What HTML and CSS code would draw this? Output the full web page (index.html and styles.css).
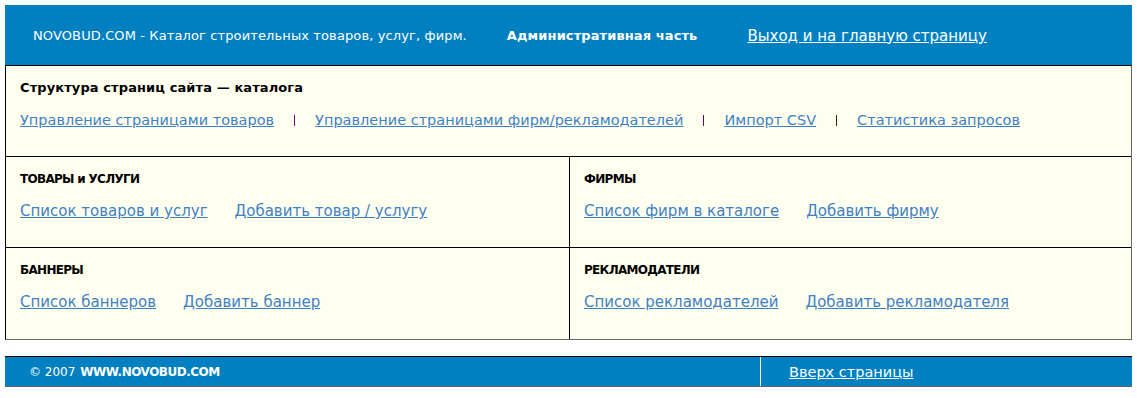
FILE: index.html
```html
<!DOCTYPE html>
<html lang="ru">
<head>
  <meta charset="UTF-8" />
  <title>NOVOBUD.COM - Административная часть</title>
  <link rel="stylesheet" href="styles.css">
</head>
<body>
  <!-- Top bar -->
  <div class="topbar">
    <span class="site">NOVOBUD.COM - Каталог строительных товаров, услуг, фирм.</span>
    <span class="admin">Административная часть</span>
    <a href="#" class="exit">Выход и на главную страницу</a>
  </div>

  <!-- Catalog management -->
  <div class="panel">
    <div class="section">
      <div class="title">Структура страниц сайта — каталога</div>
      <div class="links">
        <a href="#">Управление страницами товаров</a>
        <span class="sep sep1"></span>
        <a href="#">Управление страницами фирм/рекламодателей</a>
        <span class="sep sep2"></span>
        <a href="#">Импорт CSV</a>
        <span class="sep sep3"></span>
        <a href="#">Статистика запросов</a>
      </div>
    </div>

    <div class="grid">
      <div class="cell">
        <div class="title caps">ТОВАРЫ и УСЛУГИ</div>
        <div class="links">
          <a href="#">Список товаров и услуг</a>
          <a href="#">Добавить товар / услугу</a>
        </div>
      </div>
      <div class="cell">
        <div class="title caps">ФИРМЫ</div>
        <div class="links">
          <a href="#">Список фирм в каталоге</a>
          <a href="#">Добавить фирму</a>
        </div>
      </div>
      <div class="cell">
        <div class="title caps">БАННЕРЫ</div>
        <div class="links">
          <a href="#">Список баннеров</a>
          <a href="#">Добавить баннер</a>
        </div>
      </div>
      <div class="cell">
        <div class="title caps">РЕКЛАМОДАТЕЛИ</div>
        <div class="links">
          <a href="#">Список рекламодателей</a>
          <a href="#">Добавить рекламодателя</a>
        </div>
      </div>
    </div>
  </div>

  <!-- Footer -->
  <div class="footer">
    <div class="copy">© 2007 <b>WWW.NOVOBUD.COM</b></div>
    <div class="up"><a href="#">Вверх страницы</a></div>
  </div>
</body>
</html>
```

FILE: styles.css
```css
body {
  margin: 5px;
  font-family: 'DejaVu Sans', Verdana, sans-serif;
  font-size: 13px;
  color: #000;
  background: #fff;
}

a {
  color: #3f80c4;
}

/* Top bar */
.topbar {
  height: 60px;
  background: #0080c0;
  color: #fff;
  display: flex;
  align-items: center;
  padding-left: 28px;
  padding-top: 1px;
  box-sizing: border-box;
}

.topbar .site {
  margin-right: 40px;
  letter-spacing: 0.12px;
}

.topbar .admin {
  font-weight: bold;
  margin-right: 50px;
  letter-spacing: 0.1px;
}

.topbar .exit {
  color: #fff;
  font-size: 15px;
}

/* Panel */
.panel {
  background: #fffff0;
  border-top: 1px solid #000;
  border-left: 1px solid #000;
  border-right: 1px solid #666;
  border-bottom: 1px solid #666;
}

.section {
  height: 91px;
  padding: 14px 14px 0;
  box-sizing: border-box;
  border-bottom: 1px solid #000;
}

.title {
  font-weight: bold;
  height: 15px;
  line-height: 15px;
}

.section .title {
  letter-spacing: 0.1px;
}

.title.caps {
  font-size: 12px;
  letter-spacing: -0.7px;
}

.links {
  margin-top: 17px;
  font-size: 15px;
  line-height: 17px;
  display: flex;
  gap: 27px;
}

.cell .links {
  margin-top: 16px;
}

.section .links {
  font-size: 14.5px;
  gap: 19px;
  align-items: center;
}

/* thin coloured dividers between links */
.sep {
  display: inline-block;
  width: 1px;
  height: 11px;
  margin: 0 1px;
}

.sep1 { background: #800080; }
.sep2 { background: #800060; }
.sep3 { background: #402000; }

.grid {
  display: grid;
  grid-template-columns: 564px 1fr;
}

.cell {
  height: 91px;
  padding: 15px 14px 0;
  box-sizing: border-box;
}

.cell:nth-child(odd) {
  border-right: 1px solid #000;
}

.cell:nth-child(-n+2) {
  border-bottom: 1px solid #000;
}

/* Footer */
.footer {
  margin-top: 16px;
  display: flex;
  background: #0080c0;
  color: #fff;
  border-top: 1px solid #000;
  border-bottom: 1px solid #666;
  height: 29px;
  align-items: center;
}

.footer .copy {
  width: 756px;
  padding-left: 24px;
  box-sizing: border-box;
  height: 100%;
  display: flex;
  align-items: center;
  gap: 5px;
  font-size: 12px;
  border-right: 1px solid #fff;
}

.footer .copy b {
  letter-spacing: -0.5px;
}

.footer .up {
  padding-left: 28px;
  font-size: 14.5px;
}

.footer .up a {
  color: #fff;
}
```
